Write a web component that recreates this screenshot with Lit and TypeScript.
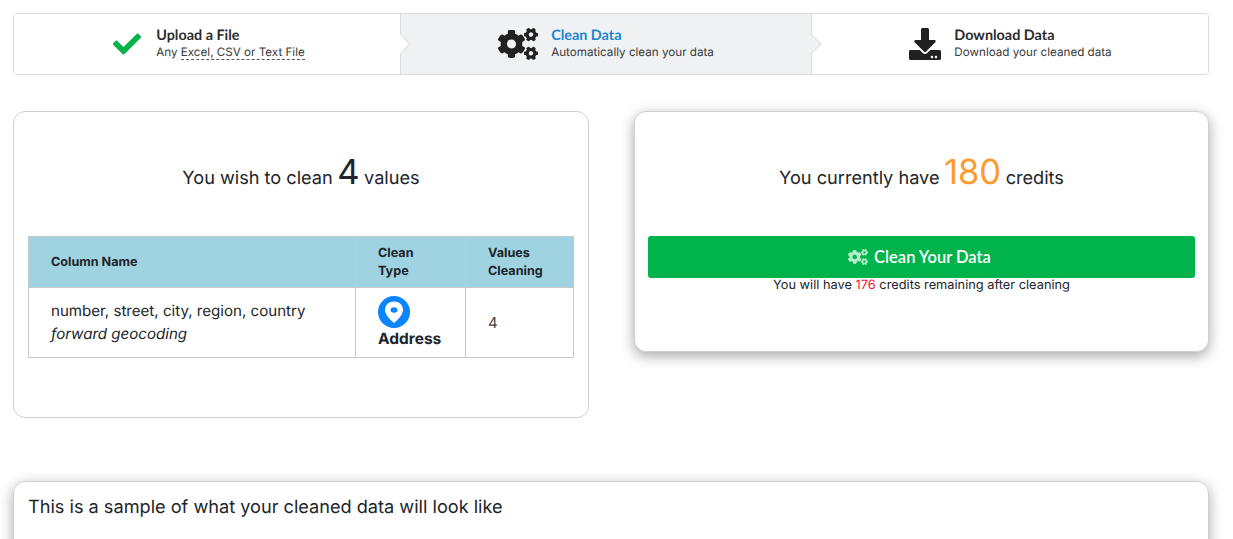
import { LitElement, html, css, svg } from "lit";
import { customElement } from "lit/decorators.js";

const COGS = "M512.1 191l-8.2 14.3c-3 5.3-9.4 7.5-15.1 5.4-11.8-4.4-22.6-10.7-32.1-18.6-4.6-3.8-5.8-10.5-2.8-15.7l8.2-14.3c-6.9-8-12.3-17.3-15.9-27.4h-16.5c-6 0-11.2-4.3-12.2-10.3-2-12-2.1-24.6 0-37.1 1-6 6.2-10.4 12.2-10.4h16.5c3.6-10.1 9-19.4 15.9-27.4l-8.2-14.3c-3-5.2-1.9-11.9 2.8-15.7 9.5-7.9 20.4-14.2 32.1-18.6 5.7-2.1 12.1.1 15.1 5.4l8.2 14.3c10.5-1.9 21.2-1.9 31.7 0L552 6.3c3-5.3 9.4-7.5 15.1-5.4 11.8 4.4 22.6 10.7 32.1 18.6 4.6 3.8 5.8 10.5 2.8 15.7l-8.2 14.3c6.9 8 12.3 17.3 15.9 27.4h16.5c6 0 11.2 4.3 12.2 10.3 2 12 2.1 24.6 0 37.1-1 6-6.2 10.4-12.2 10.4h-16.5c-3.6 10.1-9 19.4-15.9 27.4l8.2 14.3c3 5.2 1.9 11.9-2.8 15.7-9.5 7.9-20.4 14.2-32.1 18.6-5.7 2.1-12.1-.1-15.1-5.4l-8.2-14.3c-10.4 1.9-21.2 1.9-31.7 0zm-10.5-58.8c38.5 29.6 82.4-14.3 52.8-52.8-38.5-29.7-82.4 14.3-52.8 52.8zM386.3 286.1l33.7 16.8c10.1 5.8 14.5 18.1 10.5 29.1-8.9 24.2-26.4 46.4-42.6 65.8-7.4 8.9-20.2 11.1-30.3 5.3l-29.1-16.8c-16 13.7-34.6 24.6-54.9 31.7v33.6c0 11.6-8.3 21.6-19.7 23.6-24.6 4.2-50.4 4.4-75.9 0-11.5-2-20-11.9-20-23.6V418c-20.3-7.2-38.9-18-54.9-31.7L74 403c-10 5.8-22.9 3.6-30.3-5.3-16.2-19.4-33.3-41.6-42.2-65.7-4-10.9.4-23.2 10.5-29.1l33.3-16.8c-3.9-20.9-3.9-42.4 0-63.4L12 205.8c-10.1-5.8-14.6-18.1-10.5-29 8.9-24.2 26-46.4 42.2-65.8 7.4-8.9 20.2-11.1 30.3-5.3l29.1 16.8c16-13.7 34.6-24.6 54.9-31.7V57.1c0-11.5 8.2-21.5 19.6-23.5 24.6-4.2 50.5-4.4 76-.1 11.5 2 20 11.9 20 23.6v33.6c20.3 7.2 38.9 18 54.9 31.7l29.1-16.8c10-5.8 22.9-3.6 30.3 5.3 16.2 19.4 33.2 41.6 42.1 65.8 4 10.9.1 23.2-10 29.1l-33.7 16.8c3.9 21 3.9 42.5 0 63.5zm-117.6 21.1c59.2-77-28.7-164.9-105.7-105.7-59.2 77 28.7 164.9 105.7 105.7zm243.4 182.7l-8.2 14.3c-3 5.3-9.4 7.5-15.1 5.4-11.8-4.4-22.6-10.7-32.1-18.6-4.6-3.8-5.8-10.5-2.8-15.7l8.2-14.3c-6.9-8-12.3-17.3-15.9-27.4h-16.5c-6 0-11.2-4.3-12.2-10.3-2-12-2.1-24.6 0-37.1 1-6 6.2-10.4 12.2-10.4h16.5c3.6-10.1 9-19.4 15.9-27.4l-8.2-14.3c-3-5.2-1.9-11.9 2.8-15.7 9.5-7.9 20.4-14.2 32.1-18.6 5.7-2.1 12.1.1 15.1 5.4l8.2 14.3c10.5-1.9 21.2-1.9 31.7 0l8.2-14.3c3-5.3 9.4-7.5 15.1-5.4 11.8 4.4 22.6 10.7 32.1 18.6 4.6 3.8 5.8 10.5 2.8 15.7l-8.2 14.3c6.9 8 12.3 17.3 15.9 27.4h16.5c6 0 11.2 4.3 12.2 10.3 2 12 2.1 24.6 0 37.1-1 6-6.2 10.4-12.2 10.4h-16.5c-3.6 10.1-9 19.4-15.9 27.4l8.2 14.3c3 5.2 1.9 11.9-2.8 15.7-9.5 7.9-20.4 14.2-32.1 18.6-5.7 2.1-12.1-.1-15.1-5.4l-8.2-14.3c-10.4 1.9-21.2 1.9-31.7 0zM501.6 431c38.5 29.6 82.4-14.3 52.8-52.8-38.5-29.6-82.4 14.3-52.8 52.8z";
const CHECK = "M173.898 439.404l-166.4-166.4c-9.997-9.997-9.997-26.206 0-36.204l36.203-36.204c9.997-9.998 26.207-9.998 36.204 0L192 312.69 432.095 72.596c9.997-9.997 26.207-9.997 36.204 0l36.203 36.204c9.997 9.997 9.997 26.206 0 36.204l-294.4 294.401c-9.998 9.997-26.207 9.997-36.204-.001z";
const DOWNLOAD = "M216 0h80c13.3 0 24 10.7 24 24v168h87.7c17.8 0 26.7 21.5 14.1 34.1L269.7 378.3c-7.5 7.5-19.8 7.5-27.3 0L90.1 226.1c-12.6-12.6-3.7-34.1 14.1-34.1H192V24c0-13.3 10.7-24 24-24zm296 376v112c0 13.3-10.7 24-24 24H24c-13.3 0-24-10.7-24-24V376c0-13.3 10.7-24 24-24h146.7l49 49c20.1 20.1 52.5 20.1 72.6 0l49-49H488c13.3 0 24 10.7 24 24zm-124 88c0-11-9-20-20-20s-20 9-20 20 9 20 20 20 20-9 20-20zm64 0c0-11-9-20-20-20s-20 9-20 20 9 20 20 20 20-9 20-20z";

const icon = (d: string, vb: string, cls: string) =>
  html`<svg class=${cls} viewBox=${vb} aria-hidden="true">${svg`<path d=${d} fill="currentColor"></path>`}</svg>`;

@customElement("app-root")
export class AppRoot extends LitElement {
  static styles = css`
    :host {
      display: block;
      height: 539px;
      overflow: hidden;
      background: #fff;
      font-family: Inter, "Liberation Sans", sans-serif;
      color: #212529;
      text-rendering: geometricPrecision;
    }
    * { box-sizing: border-box; }
    .page { padding: 13px 24px 0 13px; }

    .steps {
      display: grid;
      grid-template-columns: 387px 411px 1fr;
      height: 62px;
      border: 1px solid #dcdcdd;
      border-radius: 4px;
    }
    .step {
      position: relative;
      display: flex;
      align-items: center;
      justify-content: center;
      gap: 13px;
      border-right: 1px solid #dcdcdd;
      background: #fff;
    }
    .step:first-child { padding-left: 4px; border-radius: 3px 0 0 3px; }
    .step:last-child { padding-left: 1px; border-right: 0; border-radius: 0 3px 3px 0; }
    .step.active { background: #f0f1f3; }
    .step:not(:last-child)::after {
      content: "";
      position: absolute;
      z-index: 1;
      top: 50%;
      right: 0;
      width: 14px;
      height: 14px;
      background: inherit;
      border-top: 1px solid #dcdcdd;
      border-right: 1px solid #dcdcdd;
      transform: translate(50%, -50%) rotate(45deg);
    }
    .ico-check { width: 28px; height: 28px; margin-right: 2px; color: #00b34a; }
    .ico-cogs { width: 40px; height: 32px; color: #212121; }
    .ico-down { width: 32px; height: 32px; color: #212121; }
    .label { display: flex; flex-direction: column; margin-top: -1px; }
    .title {
      font: 700 14.4px/17px Lato, "Liberation Sans", sans-serif;
      color: #2b2b2b;
    }
    .active .title { color: #2185d0; }
    .desc {
      font: 400 11.65px/16px Inter, "Liberation Sans", sans-serif;
      color: #3a3a3a;
      white-space: nowrap;
    }
    .dashed { border-bottom: 1px dashed #555; }

    .columns {
      display: grid;
      grid-template-columns: 576px 575px;
      column-gap: 45px;
      align-items: start;
      margin-top: 36px;
    }
    .card {
      background: #fff;
      border: 1px solid #d0d0d0;
      border-radius: 12px;
      padding: 0 14px;
    }
    .left { height: 307px; }
    .right { height: 241px; }
    .raised { box-shadow: 0 4px 14px rgba(0, 0, 0, 0.35); }
    .headline {
      height: 124px;
      display: flex;
      align-items: baseline;
      justify-content: center;
      gap: 4.5px;
      padding-top: 41px;
      font-size: 18.15px;
      line-height: 40px;
    }
    .big { font-size: 34.5px; line-height: 40px; }
    .orange { color: #ff9a2e; }

    table {
      width: 100%;
      table-layout: fixed;
      border-collapse: collapse;
      border: 1px solid #c8c8c8;
      font-size: 15.1px;
    }
    th, td { border: 1px solid #c8c8c8; text-align: left; vertical-align: middle; padding: 0 0 0 22px; }
    th {
      height: 51px;
      padding-top: 1px;
      background: #9fd3e2;
      font-size: 12.6px;
      font-weight: 700;
      line-height: 18px;
    }
    td { height: 70px; line-height: 22px; }
    .body-cell { padding-bottom: 1px; line-height: 23px; }
    .name { width: 327px; }
    .type { width: 110px; }
    .pin { display: block; width: 32px; height: 32px; margin-top: -1px; }
    .addr { display: block; margin-top: 1px; font-weight: 700; font-size: 15.5px; line-height: 19px; }
    .num { font-size: 15px; color: #444; }

    .credits { padding: 0 13px; }
    .cta {
      display: flex;
      align-items: center;
      justify-content: center;
      gap: 6px;
      width: 100%;
      height: 42px;
      padding: 0 4px 1px 0;
      border: 0;
      border-radius: 3px;
      background: #00b34a;
      color: #fff;
      font: 600 16.5px Lato, "Liberation Sans", sans-serif;
    }
    .ico-cta { width: 20px; height: 16px; margin-top: 1px; color: #b5ecc9; }
    .note { margin: 0; text-align: center; font-size: 12.8px; line-height: 15px; }
    .red { color: #f5142e; }

    .sample {
      margin-top: 63px;
      height: 200px;
      padding: 14px;
      border: 1px solid #d0d0d0;
      border-radius: 12px;
      font-size: 18.15px;
      line-height: 22px;
    }
  `;

  render() {
    return html`
      <div class="page">
        <div class="steps">
          <div class="step">
            ${icon(CHECK, "0 0 512 512", "ico-check")}
            <div class="label">
              <span class="title">Upload a File</span>
              <span class="desc">Any <span class="dashed">Excel, CSV or Text File</span></span>
            </div>
          </div>
          <div class="step active">
            ${icon(COGS, "0 0 640 512", "ico-cogs")}
            <div class="label">
              <span class="title">Clean Data</span>
              <span class="desc">Automatically clean your data</span>
            </div>
          </div>
          <div class="step">
            ${icon(DOWNLOAD, "0 0 512 512", "ico-down")}
            <div class="label">
              <span class="title">Download Data</span>
              <span class="desc">Download your cleaned data</span>
            </div>
          </div>
        </div>

        <div class="columns">
          <section class="card left">
            <div class="headline"><span>You wish to clean</span><span class="big">4</span><span>values</span></div>
            <table>
              <thead>
                <tr>
                  <th class="name">Column Name</th>
                  <th class="type">Clean<br />Type</th>
                  <th>Values<br />Cleaning</th>
                </tr>
              </thead>
              <tbody>
                <tr>
                  <td class="body-cell">number, street, city, region, country<br /><em>forward geocoding</em></td>
                  <td>
                    <svg class="pin" viewBox="0 0 32 32" aria-hidden="true">
                      <circle cx="16" cy="16" r="16" fill="#0a84ff"></circle>
                      <path fill="#fff" d="M16 5.5c-5 0-9 3.5-9 8.2 0 5 5.6 10.4 9 13.3 3.4-2.9 9-8.3 9-13.3 0-4.7-4-8.2-9-8.2z"></path>
                      <ellipse cx="16" cy="14" rx="3.5" ry="2.7" fill="#0a84ff"></ellipse>
                    </svg>
                    <span class="addr">Address</span>
                  </td>
                  <td class="num">4</td>
                </tr>
              </tbody>
            </table>
          </section>

          <section class="card right raised credits">
            <div class="headline"><span>You currently have</span><span class="big orange">180</span><span>credits</span></div>
            <button class="cta">${icon(COGS, "0 0 640 512", "ico-cta")}<span>Clean Your Data</span></button>
            <p class="note">You will have <span class="red">176</span> credits remaining after cleaning</p>
          </section>
        </div>

        <section class="sample raised">This is a sample of what your cleaned data will look like</section>
      </div>
    `;
  }
}
